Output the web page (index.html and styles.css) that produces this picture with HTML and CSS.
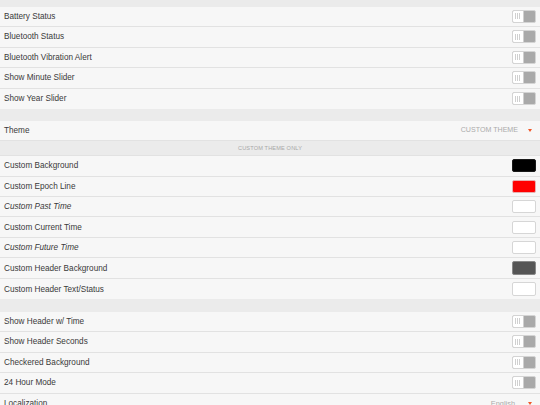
FILE: index.html
```html
<!DOCTYPE html>
<html>
<head>
<meta charset="utf-8">
<link rel="stylesheet" href="styles.css">
</head>
<body>
<div class="page">
  <div class="gap top"></div>
  <div class="group">
    <div class="row"><span class="label">Battery Status</span><span class="toggle"><span class="knob"><i></i><i></i><i></i></span></span></div>
    <div class="row"><span class="label">Bluetooth Status</span><span class="toggle"><span class="knob"><i></i><i></i><i></i></span></span></div>
    <div class="row"><span class="label">Bluetooth Vibration Alert</span><span class="toggle"><span class="knob"><i></i><i></i><i></i></span></span></div>
    <div class="row"><span class="label">Show Minute Slider</span><span class="toggle"><span class="knob"><i></i><i></i><i></i></span></span></div>
    <div class="row"><span class="label">Show Year Slider</span><span class="toggle"><span class="knob"><i></i><i></i><i></i></span></span></div>
  </div>
  <div class="gap"></div>
  <div class="group">
    <div class="row"><span class="label">Theme</span><span class="select">CUSTOM THEME<span class="caret"></span></span></div>
    <div class="subhead">CUSTOM THEME ONLY</div>
    <div class="row"><span class="label">Custom Background</span><span class="swatch black"></span></div>
    <div class="row"><span class="label">Custom Epoch Line</span><span class="swatch red"></span></div>
    <div class="row"><span class="label italic">Custom Past Time</span><span class="swatch white"></span></div>
    <div class="row"><span class="label">Custom Current Time</span><span class="swatch white"></span></div>
    <div class="row"><span class="label italic">Custom Future Time</span><span class="swatch white"></span></div>
    <div class="row"><span class="label">Custom Header Background</span><span class="swatch dark"></span></div>
    <div class="row"><span class="label">Custom Header Text/Status</span><span class="swatch white"></span></div>
  </div>
  <div class="gap wide"></div>
  <div class="group">
    <div class="row"><span class="label">Show Header w/ Time</span><span class="toggle"><span class="knob"><i></i><i></i><i></i></span></span></div>
    <div class="row"><span class="label">Show Header Seconds</span><span class="toggle"><span class="knob"><i></i><i></i><i></i></span></span></div>
    <div class="row"><span class="label">Checkered Background</span><span class="toggle"><span class="knob"><i></i><i></i><i></i></span></span></div>
    <div class="row"><span class="label">24 Hour Mode</span><span class="toggle"><span class="knob"><i></i><i></i><i></i></span></span></div>
    <div class="row"><span class="label">Localization</span><span class="select lang">English<span class="caret"></span></span></div>
  </div>
</div>
</body>
</html>
```
FILE: styles.css
```css
html, body {
  margin: 0;
  padding: 0;
  background: #ebebeb;
  overflow: hidden;
}
.page {
  width: 540px;
  display: flex;
  flex-direction: column;
  font-family: "Liberation Sans", Arial, sans-serif;
}
.gap {
  height: 11.7px;
  background: #ebebeb;
}
.gap.top {
  height: 6.7px;
}
.gap.wide {
  height: 12.5px;
}
.group {
  display: flex;
  flex-direction: column;
}
.row {
  box-sizing: border-box;
  height: 20.46px;
  background: #f7f7f7;
  border-bottom: 1px solid #e2e2e2;
  display: flex;
  align-items: center;
  justify-content: space-between;
  padding: 0 4px 0 4px;
}
.group .row:last-child {
  border-bottom: none;
}
.label {
  font-size: 8.2px;
  color: #3a3a3a;
}
.label.italic {
  font-style: italic;
}
.toggle {
  box-sizing: border-box;
  width: 24px;
  height: 13px;
  border: 1px solid #d4d4d4;
  border-radius: 2px;
  background: #a9a9a9;
  display: flex;
  overflow: hidden;
}
.knob {
  width: 9.5px;
  height: 100%;
  background: #ffffff;
  border-right: 1px solid #d0d0d0;
  display: flex;
  align-items: center;
  justify-content: center;
  gap: 1.3px;
}
.knob i {
  display: block;
  width: 0.7px;
  height: 6px;
  background: #d0d0d0;
}
.swatch {
  box-sizing: border-box;
  width: 24.5px;
  height: 13.3px;
  border-radius: 2px;
  border: 1px solid #d6d6d6;
}
.swatch.black { background: #000000; border-color: #1a1a1a; }
.swatch.red { background: #ff0000; border-color: #e8b0b0; }
.swatch.white { background: #ffffff; }
.swatch.dark { background: #555555; border-color: #888888; }
.select {
  font-size: 7.1px;
  color: #ababab;
  display: flex;
  align-items: center;
  margin-right: 4px;
}
.select.lang {
  font-size: 7.4px;
}
.caret {
  display: inline-block;
  width: 0;
  height: 0;
  border-left: 2.8px solid transparent;
  border-right: 2.8px solid transparent;
  border-top: 3.6px solid #f0582a;
  margin-left: 10px;
}
.select.lang .caret {
  margin-left: 13px;
}
.subhead {
  box-sizing: border-box;
  height: 15px;
  background: #ebebeb;
  border-bottom: 1px solid #e2e2e2;
  display: flex;
  align-items: center;
  justify-content: center;
  font-size: 5.6px;
  color: #a8a8a8;
  letter-spacing: 0.15px;
}
```
